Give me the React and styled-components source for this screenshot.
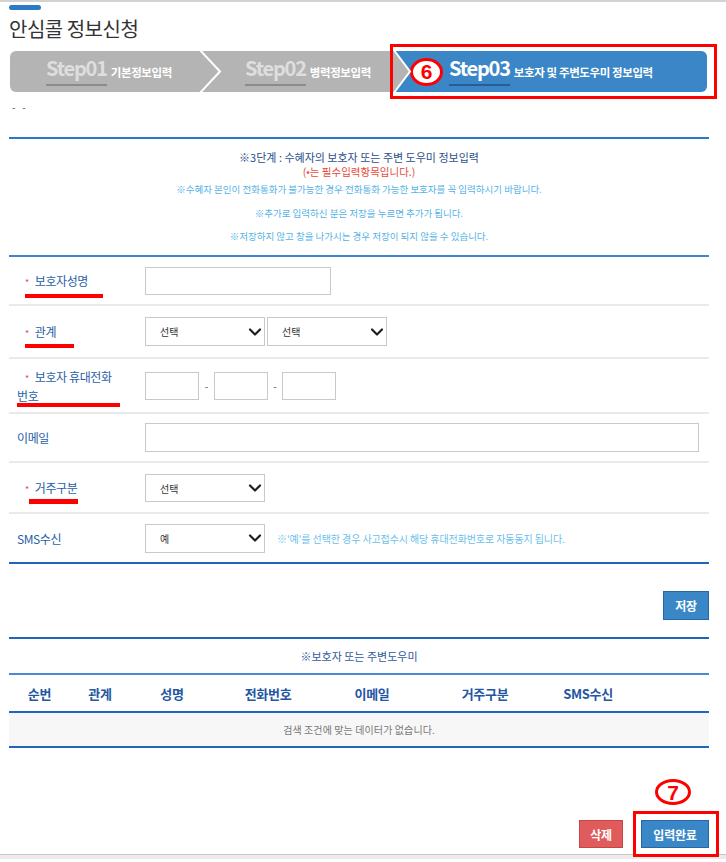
import React from 'react';
import styled, { createGlobalStyle, css } from 'styled-components';
import { ChevronDown } from 'lucide-react';

const FONT = `"Noto Sans CJK KR", "Noto Sans", sans-serif`;

const Global = createGlobalStyle`
  *, *::before, *::after { box-sizing: border-box; }
  html, body { margin: 0; padding: 0; overflow: hidden; background: #fff; }
  body { font-family: ${FONT}; color: #333; width: 726px; height: 862px; word-break: keep-all; }
`;

const Page = styled.div`
  width: 726px;
  height: 862px;
  display: flex;
  flex-direction: column;
`;

const TopRule = styled.div`
  flex: none;
  height: 2px;
  background: #d2d2d2;
`;

const Content = styled.div`
  margin-left: 9px;
  width: 700px;
  display: flex;
  flex-direction: column;
`;

const Pill = styled.div`
  flex: none;
  margin-top: 3px;
  width: 32px;
  height: 5px;
  border-radius: 3px;
  background: #2a7ac6;
`;

const Title = styled.h1`
  margin: 7px 0 0;
  font-size: 20px;
  line-height: 24px;
  font-weight: 400;
  letter-spacing: -0.5px;
  color: #333;
`;

const StepWrap = styled.div`
  position: relative;
  margin: 10px 0 0 1px;
  width: 697px;
`;

const Bar = styled.div`
  position: relative;
  display: flex;
  height: 41px;
  border-radius: 6px;
  overflow: hidden;
  background: #b4b4b4;
`;

const Step = styled.div`
  display: flex;
  align-items: center;
  width: ${p => (p.$w ? `${p.$w}px` : 'auto')};
  flex: ${p => (p.$w ? 'none' : '1')};
  padding-left: ${p => p.$pl}px;
  background: ${p => (p.$active ? '#3a86c7' : 'transparent')};
`;

const StepNum = styled.span`
  display: inline-block;
  font-size: 20px;
  line-height: 20px;
  font-weight: 700;
  letter-spacing: -1.2px;
  padding-bottom: 6px;
  border-bottom: 2px solid ${p => (p.$active ? '#2b5d95' : '#8c8c8c')};
  color: ${p => (p.$active ? '#ffffff' : '#dedede')};
`;

const StepName = styled.span`
  margin-left: 4px;
  font-size: 11.5px;
  font-weight: 700;
  letter-spacing: -0.4px;
  color: #fff;
`;

const Chevrons = styled.svg`
  position: absolute;
  left: 0;
  top: 0;
  pointer-events: none;
`;

const NumMark = styled.span`
  display: inline-flex;
  align-items: center;
  justify-content: center;
  width: ${p => p.$w}px;
  height: ${p => p.$h}px;
  border: 3px solid #f00;
  border-radius: 50%;
  background: #fff;
  color: #f00;
  font-family: "Liberation Sans", Arial, sans-serif;
  font-weight: 700;
  font-size: 21px;
  line-height: 1;
  margin-right: 6px;
`;

const FloatNum = styled(NumMark)`
  position: absolute;
  left: ${p => p.$l}px;
  top: ${p => p.$t}px;
  margin: 0;
`;

const RedBox = styled.div`
  position: absolute;
  left: ${p => p.$l}px;
  top: ${p => p.$t}px;
  width: ${p => p.$w}px;
  height: ${p => p.$h}px;
  border: 3px solid #f00;
  pointer-events: none;
`;

const Dots = styled.div`
  margin: 8px 0 0 3px;
  height: 14px;
  line-height: 14px;
  font-size: 10px;
  color: #555;
  white-space: pre;
`;

const Notice = styled.section`
  margin-top: 23px;
  border-top: 2px solid #2a78c6;
  padding: 10px 0 11px;
  text-align: center;
`;

const NoticeLine = styled.p`
  margin: ${p => p.$mt || 0}px 0 0;
  font-size: ${p => p.$fs}px;
  line-height: ${p => p.$lh}px;
  color: ${p => p.$c};
  letter-spacing: ${p => p.$ls || 0}px;
`;

const Form = styled.div`
  border-top: 2px solid #3f86cf;
`;

const Row = styled.div`
  position: relative;
  display: flex;
  align-items: center;
  height: ${p => p.$h}px;
  border-bottom: 2px solid ${p => (p.$last ? '#1f66b8' : '#eaeaea')};
`;

const Label = styled.div`
  width: 136px;
  padding: 0 14px 0 8px;
  font-size: 12px;
  line-height: 19px;
  letter-spacing: -0.4px;
  color: #2860a8;
  word-break: keep-all;
  ${p => p.$req && css`
    &::before {
      content: '*';
      display: inline-block;
      margin: 0 6px 0 8px;
      font-size: 9px;
      line-height: 9px;
      color: #e05050;
    }
  `}
`;

const Mark = styled.div`
  position: absolute;
  left: ${p => p.$l}px;
  top: ${p => p.$t}px;
  width: ${p => p.$w}px;
  height: ${p => p.$h || 4}px;
  background: #f00;
`;

const Field = styled.div`
  flex: 1;
  display: flex;
  align-items: center;
`;

const TextInput = styled.input`
  width: ${p => p.$w}px;
  height: ${p => p.$h || 29}px;
  border: 1px solid #c9c9c9;
  background: #fff;
  outline: none;
  border-radius: 0;
  padding: 0 6px;
  font: 11px ${FONT};
`;

const Dash = styled.span`
  width: ${p => p.$w}px;
  text-align: center;
  font-size: 10px;
  color: #555;
`;

const SelectBox = styled.div`
  position: relative;
  width: ${p => p.$w || 120}px;
  height: ${p => p.$h || 29}px;
  margin-right: ${p => p.$mr || 0}px;
`;

const NativeSelect = styled.select`
  appearance: none;
  -webkit-appearance: none;
  width: 100%;
  height: 100%;
  border: 1px solid #c9c9c9;
  border-radius: 0;
  background: #fff;
  padding: 0 0 0 14px;
  font: 10px ${FONT};
  color: #333;
  outline: none;
`;

const Caret = styled(ChevronDown)`
  position: absolute;
  right: 0;
  top: 50%;
  transform: translateY(-50%);
  pointer-events: none;
  color: #1e1e1e;
`;

const Hint = styled.span`
  margin-left: 12px;
  font-size: 10px;
  letter-spacing: -0.1px;
  color: #6cbfea;
`;

const Actions = styled.div`
  position: relative;
  display: flex;
  justify-content: flex-end;
  gap: 18px;
  padding: ${p => p.$pt}px 0 ${p => p.$pb}px;
`;

const Btn = styled.button`
  position: relative;
  width: ${p => p.$w}px;
  height: ${p => p.$h || 29}px;
  padding: 0;
  border: 1px solid ${p => (p.$red ? '#c84545' : '#2767a5')};
  background: ${p => (p.$red ? '#e05c5c' : '#3a87c8')};
  color: #fff;
  font: 700 12px ${FONT};
  letter-spacing: -0.2px;
  border-radius: 0;
  cursor: pointer;
`;

const BtnSlot = styled.div`
  position: relative;
`;

const ListSection = styled.section`
  border-top: 2px solid #1f66b8;
`;

const Caption = styled.div`
  height: 36px;
  display: flex;
  align-items: center;
  justify-content: center;
  font-size: 11px;
  color: #2e5b9a;
  border-bottom: 2px solid #4a8ad0;
`;

const Grid = styled.div`
  display: grid;
  grid-template-columns: 61px 60px 84px 108px 100px 126px 80px 1fr;
  align-items: center;
  height: ${p => p.$h}px;
  border-bottom: 2px solid #1f66b8;
  background: ${p => p.$bg || '#fff'};
`;

const Th = styled.div`
  text-align: center;
  font-size: 13px;
  font-weight: 700;
  letter-spacing: -0.3px;
  color: #2356a3;
`;

const Empty = styled.div`
  grid-column: 1 / -1;
  text-align: center;
  font-size: 10px;
  color: #777;
  letter-spacing: 0.1px;
`;

const Footer = styled.div`
  margin-top: 6px;
  height: 5px;
  border-top: 1px solid #c8c8c8;
  background: #ebebeb;
`;

function Select({ w, mr, h, value }) {
  return (
    <SelectBox $w={w} $mr={mr} $h={h}>
      <NativeSelect defaultValue={value}>
        <option>{value}</option>
      </NativeSelect>
      <Caret size={20} strokeWidth={2.6} />
    </SelectBox>
  );
}

const headers = ['순번', '관계', '성명', '전화번호', '이메일', '거주구분', 'SMS수신', ''];

export default function App() {
  return (
    <>
      <Global />
      <Page>
        <TopRule />
        <Content>
          <Pill />
          <Title>안심콜 정보신청</Title>

          <StepWrap>
            <Bar>
              <Step $w={190} $pl={36}>
                <StepNum>Step01</StepNum>
                <StepName>기본정보입력</StepName>
              </Step>
              <Step $w={193} $pl={45}>
                <StepNum>Step02</StepNum>
                <StepName>병력정보입력</StepName>
              </Step>
              <Step $active $pl={17}>
                <NumMark $w={33} $h={28}>6</NumMark>
                <StepNum $active>Step03</StepNum>
                <StepName>보호자 및 주변도우미 정보입력</StepName>
              </Step>
              <Chevrons width="697" height="41" viewBox="0 0 697 41">
                <polyline points="189,-2 210,20.5 189,43" fill="none" stroke="#fff" strokeWidth="2" />
                <polygon points="383,0 400,20.5 383,41" fill="#b4b4b4" />
                <polyline points="383,-2 400,20.5 383,43" fill="none" stroke="#fff" strokeWidth="2" />
              </Chevrons>
            </Bar>
            <RedBox $l={380} $t={-7} $w={327} $h={55} />
          </StepWrap>

          <Dots>{'-   -'}</Dots>

          <Notice>
            <NoticeLine $fs={11} $lh={16} $c="#2b4f8c">※3단계 : 수혜자의 보호자 또는 주변 도우미 정보입력</NoticeLine>
            <NoticeLine $fs={10.5} $lh={14} $c="#e8493a">(•는 필수입력항목입니다.)</NoticeLine>
            <NoticeLine $mt={2} $fs={9.5} $lh={16} $c="#55b3e6">※수혜자 본인이 전화통화가 불가능한 경우 전화통화 가능한 보호자를 꼭 입력하시기 바랍니다.</NoticeLine>
            <NoticeLine $mt={8} $fs={9.5} $lh={16} $c="#55b3e6">※추가로 입력하신 분은 저장을 누르면 추가가 됩니다.</NoticeLine>
            <NoticeLine $mt={7} $fs={9.5} $lh={16} $c="#55b3e6">※저장하지 않고 창을 나가시는 경우 저장이 되지 않을 수 있습니다.</NoticeLine>
          </Notice>

          <Form>
            <Row $h={49}>
              <Label $req>보호자성명</Label>
              <Field><TextInput $w={186} $h={28} /></Field>
              <Mark $l={16} $t={37} $w={78} />
            </Row>
            <Row $h={53}>
              <Label $req>관계</Label>
              <Field>
                <Select w={120} mr={2} value="선택" />
                <Select w={120} value="선택" />
              </Field>
              <Mark $l={16} $t={38} $w={49} />
            </Row>
            <Row $h={55}>
              <Label $req>보호자 휴대전화 번호</Label>
              <Field>
                <TextInput $w={54} $h={28} />
                <Dash $w={15}>-</Dash>
                <TextInput $w={54} $h={28} />
                <Dash $w={14}>-</Dash>
                <TextInput $w={54} $h={28} />
              </Field>
              <Mark $l={8} $t={44} $w={103} />
            </Row>
            <Row $h={49}>
              <Label>이메일</Label>
              <Field><TextInput $w={554} $h={29} /></Field>
            </Row>
            <Row $h={51}>
              <Label $req>거주구분</Label>
              <Field><Select w={120} h={28} value="선택" /></Field>
              <Mark $l={20} $t={36} $w={49} $h={5} />
            </Row>
            <Row $h={50} $last>
              <Label>SMS수신</Label>
              <Field>
                <Select w={120} value="예" />
                <Hint>※'예'를 선택한 경우 사고접수시 해당 휴대전화번호로 자동동지 됩니다.</Hint>
              </Field>
            </Row>
          </Form>

          <Actions $pt={27} $pb={17}>
            <Btn $w={46}>저장</Btn>
          </Actions>

          <ListSection>
            <Caption>※보호자 또는 주변도우미</Caption>
            <Grid $h={38}>
              {headers.map((h, i) => <Th key={i}>{h}</Th>)}
            </Grid>
            <Grid $h={35} $bg="#f7f7f7">
              <Empty>검색 조건에 맞는 데이터가 없습니다.</Empty>
            </Grid>
          </ListSection>

          <Actions $pt={72} $pb={0}>
            <Btn $red $w={44} $h={28}>삭제</Btn>
            <BtnSlot>
              <Btn $w={68} $h={28}>입력완료</Btn>
              <FloatNum $w={36} $h={26} $l={14} $t={-41}>7</FloatNum>
              <RedBox $l={-8} $t={-9} $w={86} $h={46} />
            </BtnSlot>
          </Actions>
        </Content>
        <Footer />
      </Page>
    </>
  );
}
